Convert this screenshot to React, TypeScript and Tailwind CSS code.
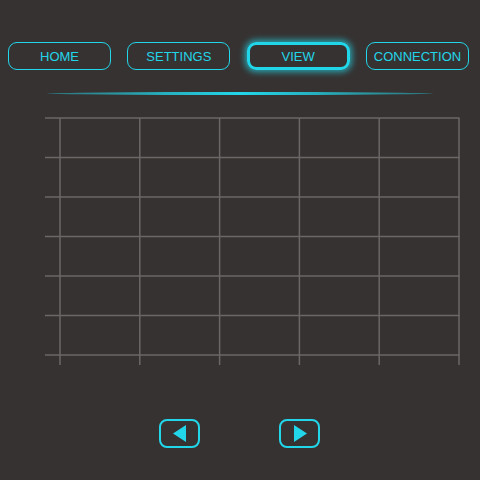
const tabs = ['HOME', 'SETTINGS', 'VIEW', 'CONNECTION'];

const rows = [0, 1, 2, 3, 4, 5, 6];
const cols = [0, 1, 2, 3, 4, 5];

function GridChart() {
  return (
    <svg width="420" height="250" viewBox="0 0 420 250" className="block">
      {/* horizontal lines */}
      {rows.map((r) => (
        <line
          key={'h' + r}
          x1={1}
          x2={415.5}
          y1={1 + r * 39.5}
          y2={1 + r * 39.5}
          stroke="#6a6766"
          strokeWidth={1.5}
        />
      ))}
      {/* vertical lines */}
      {cols.map((c) => (
        <line
          key={'v' + c}
          x1={16 + c * 79.8}
          x2={16 + c * 79.8}
          y1={1}
          y2={248}
          stroke="#6a6766"
          strokeWidth={1.5}
        />
      ))}
    </svg>
  );
}

export default function App() {
  return (
    <div
      className="w-[480px] h-[480px] bg-[#363231] flex flex-col overflow-hidden"
      style={{ fontFamily: '"Liberation Sans", Arial, sans-serif' }}
    >
      {/* Tabs */}
      <div className="flex justify-between pl-[8px] pr-[11px] pt-[42px]">
        {tabs.map((t) =>
          t === 'VIEW' ? (
            <button
              key={t}
              className="w-[103px] h-[28px] pt-[1px] rounded-[9px] border-[3px] border-[#22d6ea] shadow-[0_0_6px_2px_rgba(34,214,234,0.7)] text-[#22d6ea] text-[13px] flex items-center justify-center"
            >
              {t}
            </button>
          ) : (
            <button
              key={t}
              className="w-[103px] h-[28px] pt-[1px] rounded-[9px] border-[1.5px] border-[#22d6ea] text-[#22d6ea] text-[13px] flex items-center justify-center"
            >
              {t}
            </button>
          )
        )}
      </div>

      {/* Divider */}
      <div className="mt-[22px] ml-[47px] w-[386px] h-[3px] rounded-[50%] bg-gradient-to-r from-[#22d6ea]/40 via-[#22d6ea] to-[#22d6ea]/40" />

      {/* Grid */}
      <div className="mt-[22px] ml-[44px]">
        <GridChart />
      </div>

      {/* Arrows */}
      <div className="mt-[52px] flex pl-[159px] gap-[79px]">
        <button className="w-[41px] h-[29px] rounded-[8px] border-2 border-[#22d6ea] flex items-center justify-center">
          <svg width="14" height="17" viewBox="0 0 14 17">
            <polygon points="13,0 13,17 0,8.5" fill="#22d6ea" />
          </svg>
        </button>
        <button className="w-[41px] h-[29px] rounded-[8px] border-2 border-[#22d6ea] flex items-center justify-center">
          <svg width="14" height="17" viewBox="0 0 14 17">
            <polygon points="1,0 1,17 14,8.5" fill="#22d6ea" />
          </svg>
        </button>
      </div>
    </div>
  );
}
